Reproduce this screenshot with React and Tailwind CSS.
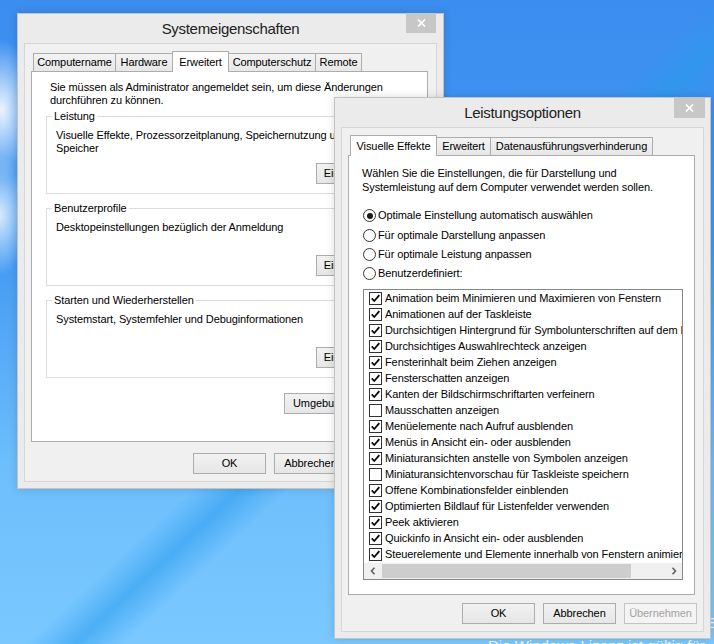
import React from "react";

const ui = "font-['Liberation_Sans',Arial,sans-serif] text-[11px] tracking-[-0.1px] leading-[13px] text-black";

const effects = [
  ["Animation beim Minimieren und Maximieren von Fenstern", true],
  ["Animationen auf der Taskleiste", true],
  ["Durchsichtigen Hintergrund für Symbolunterschriften auf dem Desktop", true],
  ["Durchsichtiges Auswahlrechteck anzeigen", true],
  ["Fensterinhalt beim Ziehen anzeigen", true],
  ["Fensterschatten anzeigen", true],
  ["Kanten der Bildschirmschriftarten verfeinern", true],
  ["Mausschatten anzeigen", false],
  ["Menüelemente nach Aufruf ausblenden", true],
  ["Menüs in Ansicht ein- oder ausblenden", true],
  ["Miniaturansichten anstelle von Symbolen anzeigen", true],
  ["Miniaturansichtenvorschau für Taskleiste speichern", false],
  ["Offene Kombinationsfelder einblenden", true],
  ["Optimierten Bildlauf für Listenfelder verwenden", true],
  ["Peek aktivieren", true],
  ["Quickinfo in Ansicht ein- oder ausblenden", true],
  ["Steuerelemente und Elemente innerhalb von Fenstern animieren", true],
];

function Button({ children, disabled, className = "" }) {
  return (
    <div
      className={`h-[21px] w-[73px] flex items-center justify-center border ${
        disabled
          ? "border-[#c4c4c4] bg-[#f4f4f4] text-[#a3a3a3]"
          : "border-[#acacac] bg-[linear-gradient(#f2f2f2,#e6e6e6)] text-black"
      } ${className}`}
    >
      {children}
    </div>
  );
}

function Window({ title, closeClass, className, children }) {
  return (
    <div
      className={`absolute flex flex-col border border-[#c3c3c3] bg-[#ebebeb] shadow-[0_0_8px_rgba(0,0,0,0.15)] ${ui} ${className}`}
    >
      <div className="h-[29px] shrink-0 flex items-center justify-center">
        <span className="font-['Liberation_Sans',Arial,sans-serif] text-[15px] tracking-[-0.3px] text-[#222]">
          {title}
        </span>
      </div>
      {/* close box */}
      <div className={`absolute h-[20px] flex items-center justify-center bg-[#c7c7c7] ${closeClass}`}>
        <svg width="9" height="8" viewBox="0 0 9 8" fill="none" stroke="white" strokeWidth="1.7">
          <path d="M1 0.5 L8 7.5 M8 0.5 L1 7.5" />
        </svg>
      </div>
      <div className="mx-[6px] mb-[6px] border border-[#d6d6d6] bg-[#f0f0f0] flex flex-col pt-[7px] pb-[7px]">
        {children}
      </div>
    </div>
  );
}

function Tabs({ tabs }) {
  return (
    <div className="relative z-10 flex items-end ml-[8px]">
      {tabs.map(([label, width, active], i) => (
        <div
          key={label}
          className={`flex items-center justify-center border-x border-t border-[#acacac] whitespace-nowrap ${
            i > 0 ? "-ml-px" : ""
          } ${
            active
              ? "relative z-20 h-[21px] -mb-px bg-white"
              : "h-[18px] bg-[linear-gradient(#f3f3f3,#e7e7e7)]"
          } ${width}`}
        >
          {label}
        </div>
      ))}
    </div>
  );
}

function Group({ label, lines, action, actionClass, className = "" }) {
  return (
    <fieldset className={`border border-[#dcdcdc] ${className}`}>
      <legend className="ml-[5px] px-[2px]">{label}</legend>
      <div className="pt-[6px] pl-[9px] pr-[7px] pb-[9px]">
        <div className="h-[34px] whitespace-nowrap">
          {lines.map((l) => (
            <div key={l}>{l}</div>
          ))}
        </div>
        <div className="flex justify-end">
          <Button className={actionClass}>{action}</Button>
        </div>
      </div>
    </fieldset>
  );
}

function Check({ on }) {
  return (
    <div className="w-[13px] h-[13px] shrink-0 border border-[#333] bg-white flex items-center justify-center">
      {on && (
        <svg width="11" height="11" viewBox="0 0 11 11" fill="none" stroke="#000" strokeWidth="1.8">
          <path d="M1.8 5.4 L4.3 8 L9.3 2.2" />
        </svg>
      )}
    </div>
  );
}

function Radio({ on, label }) {
  return (
    <div className="h-[19.4px] flex items-center gap-[2px]">
      <div className="w-[13px] h-[13px] rounded-full border border-[#333] bg-white flex items-center justify-center">
        {on && <div className="w-[6px] h-[6px] rounded-full bg-[#1a1a1a]" />}
      </div>
      <span>{label}</span>
    </div>
  );
}

function Chevron({ dir }) {
  return (
    <svg width="6" height="8" viewBox="0 0 6 8" fill="none" stroke="#606060" strokeWidth="1.6">
      <path d={dir === "left" ? "M4.5 0.8 L1.5 4 L4.5 7.2" : "M1.5 0.8 L4.5 4 L1.5 7.2"} />
    </svg>
  );
}

function SystemProperties() {
  return (
    <Window title="Systemeigenschaften" className="left-[17px] top-[13px] w-[427px]" closeClass="top-[-1px] right-[7px] w-[30px]">
      <Tabs
        tabs={[
          ["Computername", "w-[83px]"],
          ["Hardware", "w-[58px]"],
          ["Erweitert", "w-[57px]", true],
          ["Computerschutz", "w-[88px]"],
          ["Remote", "w-[47px]"],
        ]}
      />
      <div className="ml-[6px] mr-[8px] h-[371px] border border-[#acacac] bg-white px-[14px] pt-[9px]">
        <div className="pl-[4px] whitespace-nowrap">
          <div>Sie müssen als Administrator angemeldet sein, um diese Änderungen</div>
          <div>durchführen zu können.</div>
        </div>
        <Group
          className="mt-[3px]"
          label="Leistung"
          lines={["Visuelle Effekte, Prozessorzeitplanung, Speichernutzung und", "Speicher"]}
          action="Einstellungen..."
          actionClass="w-[89px]"
        />
        <Group
          className="mt-[8px]"
          label="Benutzerprofile"
          lines={["Desktopeinstellungen bezüglich der Anmeldung"]}
          action="Einstellungen..."
          actionClass="w-[89px]"
        />
        <Group
          className="mt-[8px]"
          label="Starten und Wiederherstellen"
          lines={["Systemstart, Systemfehler und Debuginformationen"]}
          action="Einstellungen..."
          actionClass="w-[89px]"
        />
        <div className="flex justify-end mt-[15px]">
          <Button className="w-[129px]">Umgebungsvariablen...</Button>
        </div>
      </div>
      <div className="flex justify-end gap-[8px] mt-[11px] mr-[8px]">
        <Button>OK</Button>
        <Button>Abbrechen</Button>
        <Button>Übernehmen</Button>
      </div>
    </Window>
  );
}

function PerformanceOptions() {
  return (
    <Window title="Leistungsoptionen" className="left-[334px] top-[97px] w-[377px]" closeClass="top-0 right-[5px] w-[31px]">
      <Tabs
        tabs={[
          ["Visuelle Effekte", "w-[87px]", true],
          ["Erweitert", "w-[55px]"],
          ["Datenausführungsverhinderung", "w-[163px]"],
        ]}
      />
      <div className="ml-[6px] mr-[8px] h-[440px] border border-[#acacac] bg-white pt-[10px]">
        <div className="pl-[13px] leading-[14px] whitespace-nowrap">
          <div>Wählen Sie die Einstellungen, die für Darstellung und</div>
          <div>Systemleistung auf dem Computer verwendet werden sollen.</div>
        </div>
        <div className="mt-[12px] pl-[14px] flex flex-col">
          <Radio on label="Optimale Einstellung automatisch auswählen" />
          <Radio label="Für optimale Darstellung anpassen" />
          <Radio label="Für optimale Leistung anpassen" />
          <Radio label="Benutzerdefiniert:" />
        </div>
        <div className="mt-[5px] ml-[14px] w-[320px] border border-[#828790] bg-white flex flex-col">
          <div className="pt-[1px] overflow-hidden">
            {effects.map(([label, on]) => (
              <div key={label} className="h-[16px] flex items-center pl-[5px] gap-[3px] whitespace-nowrap">
                <Check on={on} />
                <span>{label}</span>
              </div>
            ))}
          </div>
          {/* horizontal scroll bar */}
          <div className="h-[16px] flex bg-[#f0f0f0]">
            <div className="w-[17px] flex items-center justify-center">
              <Chevron dir="left" />
            </div>
            <div className="flex-1 flex items-stretch py-[1px]">
              <div className="ml-[1px] w-[249px] bg-[#cdcdcd]" />
            </div>
            <div className="w-[17px] flex items-center justify-center">
              <Chevron dir="right" />
            </div>
          </div>
        </div>
      </div>
      <div className="flex justify-end gap-[8px] mt-[8px] mr-[6px]">
        <Button>OK</Button>
        <Button>Abbrechen</Button>
        <Button disabled>Übernehmen</Button>
      </div>
    </Window>
  );
}

export default function App() {
  return (
    <div className="relative w-[714px] h-[644px] overflow-hidden bg-[radial-gradient(ellipse_34px_70px_at_2px_110px,rgba(244,250,255,0.95),rgba(244,250,255,0)),radial-gradient(ellipse_30px_60px_at_0px_215px,rgba(232,244,255,0.9),rgba(232,244,255,0)),linear-gradient(137deg,rgba(0,0,0,0)_51%,rgba(40,155,238,0.55)_54.5%,rgba(0,0,0,0)_58%),linear-gradient(180deg,#3b8def_0%,#4298f2_38%,#6dbefc_72%,#7ac8ff_100%)]">
      {/* desktop watermark */}
      <div className="absolute left-[488px] top-[637px] font-['Liberation_Sans',Arial,sans-serif] text-[15px] leading-[18px] text-white/90 whitespace-nowrap">
        Die Windows-Lizenz ist gültig für
      </div>
      <div className="absolute right-[-30px] top-[612px] font-['Liberation_Sans',Arial,sans-serif] text-[15px] text-white/90 whitespace-nowrap">
        Windows 8 Pro
      </div>
      <SystemProperties />
      <PerformanceOptions />
    </div>
  );
}
